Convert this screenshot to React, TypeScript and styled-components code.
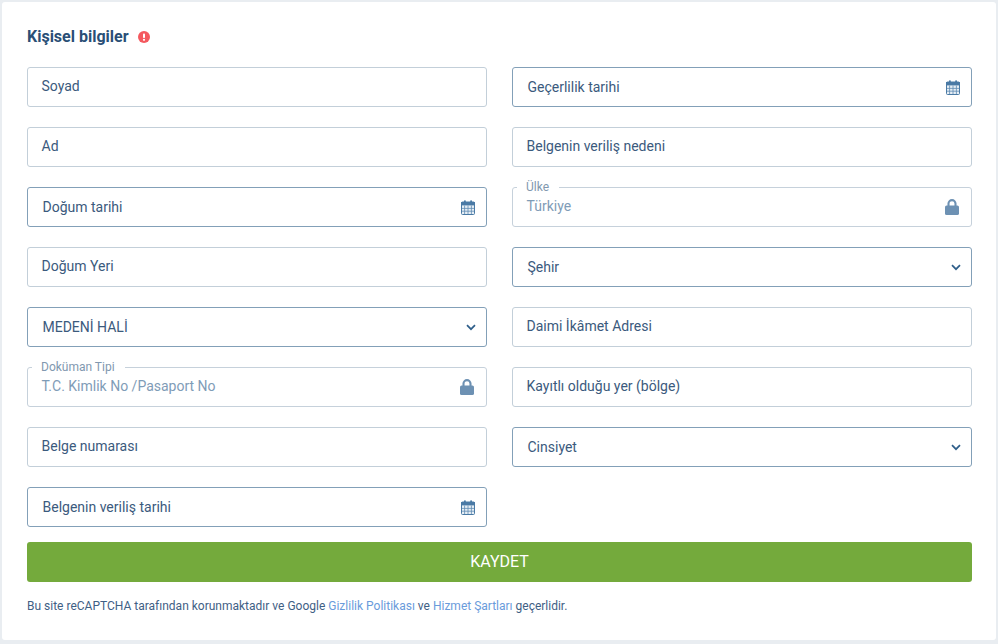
import React from "react";
import styled, { createGlobalStyle } from "styled-components";

const Global = createGlobalStyle`
  html, body { margin: 0; padding: 0; background: #e9edf1; }
  body { font-family: Roboto, "Liberation Sans", sans-serif; }
  * { box-sizing: border-box; }
`;

const Page = styled.div`
  width: 998px;
  height: 644px;
  padding: 2px 2px 4px 2px;
`;

const Card = styled.form`
  width: 994px;
  height: 638px;
  background: #fff;
  border-radius: 3px;
  padding: 25px 24px 0 25px;
`;

const TitleRow = styled.div`
  display: flex;
  align-items: center;
  gap: 9px;
  height: 20px;
  margin-bottom: 20px;
`;

const Title = styled.h2`
  margin: 0;
  font-size: 16px;
  line-height: 20px;
  font-weight: 700;
  color: #2a4f76;
`;

const Grid = styled.div`
  display: grid;
  grid-template-columns: 460px 460px;
  grid-auto-rows: 40px;
  column-gap: 25px;
  row-gap: 20px;
`;

type BoxProps = { $strong?: boolean };

const Box = styled.div<BoxProps>`
  position: relative;
  display: flex;
  align-items: center;
  justify-content: space-between;
  height: 40px;
  padding: ${(p) => (p.$strong ? "0 10px 0 14.5px" : "0 13.5px 2px 13.5px")};
  border: 1px solid ${(p) => (p.$strong ? "#83a0b8" : "#c3cfd9")};
  border-radius: 3px;
  background: #fff;
`;

const Value = styled.span`
  font-size: 14px;
  line-height: 18px;
  color: #3b5a7d;
  white-space: nowrap;
`;

const LockedBox = styled(Box)`
  padding: 0 12px 0 13.5px;
  border-color: #c6d1db;
`;

const LockedValue = styled(Value)`
  color: #7f9cb7;
  margin-top: -2px;
`;

const FloatLabel = styled.span`
  position: absolute;
  left: 4px;
  top: -8px;
  padding: 0 10px 0 9px;
  background: #fff;
  font-size: 12px;
  line-height: 14px;
  color: #8198af;
  white-space: nowrap;
`;

const SaveButton = styled.button`
  display: block;
  width: 945px;
  height: 40px;
  margin-top: 15px;
  padding: 0 0 2px;
  border: 0;
  border-radius: 3px;
  background: #74aa3c;
  color: #fff;
  font-family: inherit;
  font-size: 16px;
  font-weight: 400;
  text-transform: uppercase;
`;

const Notice = styled.p`
  margin: 16px 0 0;
  font-size: 12px;
  line-height: 16px;
  color: #3f6085;
`;

const NoticeLink = styled.a`
  color: #6a9bdb;
  text-decoration: none;
`;

const IconSlot = styled.svg<{ $inset?: number }>`
  display: block;
  flex: none;
  margin-right: ${(p) => p.$inset ?? 0}px;
`;

const AlertIcon = () => (
  <IconSlot width="12" height="12" viewBox="0 0 12 12">
    <circle cx="6" cy="6" r="6" fill="#f4595f" />
    <rect x="5" y="2.4" width="2" height="4.6" rx="0.8" fill="#fff" />
    <circle cx="6" cy="8.8" r="1.1" fill="#fff" />
  </IconSlot>
);

const CalendarIcon = () => (
  <IconSlot $inset={1} width="14" height="15" viewBox="0 0 14 15">
    <rect x="0.5" y="2" width="13" height="12.5" rx="1" fill="#e6eef5" stroke="#4a7aa5" />
    <rect x="0" y="2" width="14" height="3.4" fill="#4a7aa5" />
    <rect x="3" y="0.3" width="1.8" height="3" rx="0.8" fill="#4a7aa5" />
    <rect x="9.2" y="0.3" width="1.8" height="3" rx="0.8" fill="#4a7aa5" />
    <path d="M3.6 5.5V14M7 5.5V14M10.4 5.5V14M1 8.4H13M1 11.2H13" stroke="#5f8bb2" strokeWidth="0.8" fill="none" />
  </IconSlot>
);

const LockIcon = () => (
  <IconSlot width="14" height="16" viewBox="0 0 14 16">
    <path d="M3.5 7V4.6a3.5 3.5 0 0 1 7 0V7" fill="none" stroke="#6d91b3" strokeWidth="2.1" />
    <rect x="0" y="6.6" width="14" height="9.4" rx="1.6" fill="#6d91b3" />
  </IconSlot>
);

const ChevronIcon = () => (
  <IconSlot width="10" height="7" viewBox="0 0 10 7">
    <path d="M1 1.2 5 5.2 9 1.2" fill="none" stroke="#2f5f8a" strokeWidth="1.7" />
  </IconSlot>
);

type Field =
  | { kind: "text"; value: string }
  | { kind: "date"; value: string }
  | { kind: "select"; value: string }
  | { kind: "locked"; label: string; value: string };

const fields: Field[] = [
  { kind: "text", value: "Soyad" },
  { kind: "date", value: "Geçerlilik tarihi" },
  { kind: "text", value: "Ad" },
  { kind: "text", value: "Belgenin veriliş nedeni" },
  { kind: "date", value: "Doğum tarihi" },
  { kind: "locked", label: "Ülke", value: "Türkiye" },
  { kind: "text", value: "Doğum Yeri" },
  { kind: "select", value: "Şehir" },
  { kind: "select", value: "MEDENİ HALİ" },
  { kind: "text", value: "Daimi İkâmet Adresi" },
  { kind: "locked", label: "Doküman Tipi", value: "T.C. Kimlik No /Pasaport No" },
  { kind: "text", value: "Kayıtlı olduğu yer (bölge)" },
  { kind: "text", value: "Belge numarası" },
  { kind: "select", value: "Cinsiyet" },
  { kind: "date", value: "Belgenin veriliş tarihi" },
];

const FieldView = ({ field }: { field: Field }) => {
  switch (field.kind) {
    case "text":
      return (
        <Box>
          <Value>{field.value}</Value>
        </Box>
      );
    case "date":
      return (
        <Box $strong>
          <Value>{field.value}</Value>
          <CalendarIcon />
        </Box>
      );
    case "select":
      return (
        <Box $strong>
          <Value>{field.value}</Value>
          <ChevronIcon />
        </Box>
      );
    case "locked":
      return (
        <LockedBox>
          <FloatLabel>{field.label}</FloatLabel>
          <LockedValue>{field.value}</LockedValue>
          <LockIcon />
        </LockedBox>
      );
  }
};

export default function App() {
  return (
    <Page>
      <Global />
      <Card onSubmit={(e) => e.preventDefault()}>
        <TitleRow>
          <Title>Kişisel bilgiler</Title>
          <AlertIcon />
        </TitleRow>
        <Grid>
          {fields.map((f, i) => (
            <FieldView key={i} field={f} />
          ))}
        </Grid>
        <SaveButton type="submit">Kaydet</SaveButton>
        <Notice>
          Bu site reCAPTCHA tarafından korunmaktadır ve Google{" "}
          <NoticeLink href="#">Gizlilik Politikası</NoticeLink> ve{" "}
          <NoticeLink href="#">Hizmet Şartları</NoticeLink> geçerlidir.
        </Notice>
      </Card>
    </Page>
  );
}
